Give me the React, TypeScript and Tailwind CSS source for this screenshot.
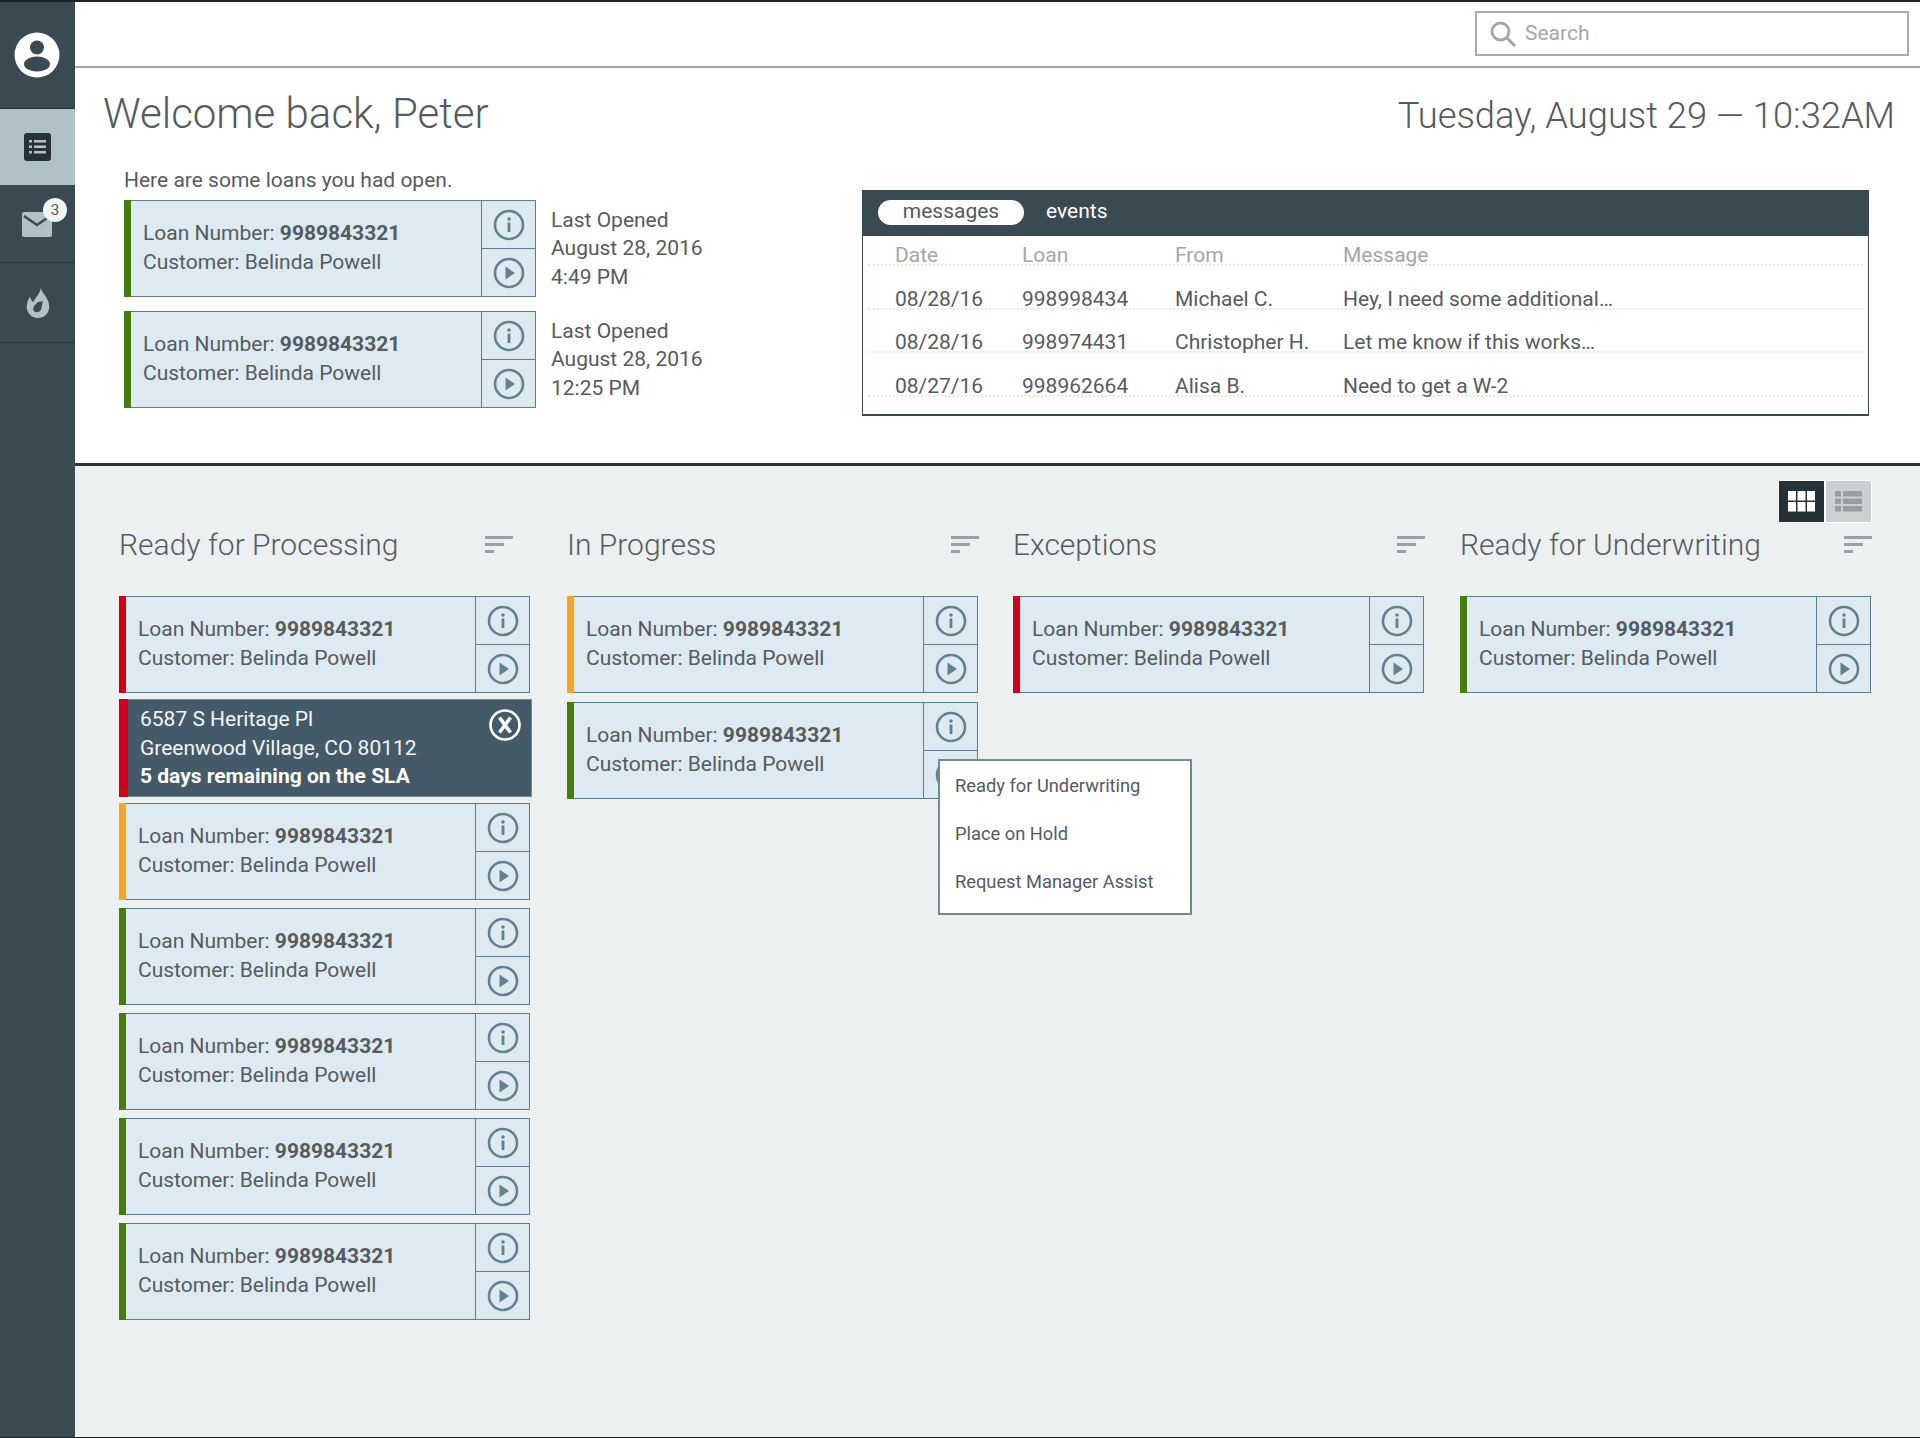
import React from 'react';

const InfoIcon = () => (
  <svg width="32" height="32" viewBox="0 0 32 32" fill="none" className="block">
    <circle cx="16" cy="16" r="14" stroke="#63808d" strokeWidth="2.6" />
    <circle cx="16" cy="10" r="1.8" fill="#63808d" />
    <rect x="14.6" y="13.5" width="2.8" height="9.5" fill="#63808d" />
  </svg>
);

const PlayIcon = () => (
  <svg width="32" height="32" viewBox="0 0 32 32" fill="none" className="block">
    <circle cx="16" cy="16" r="14" stroke="#63808d" strokeWidth="2.6" />
    <path d="M12.5 9.5 L22 16 L12.5 22.5 Z" fill="#63808d" />
  </svg>
);

const CloseIcon = () => (
  <svg width="32" height="32" viewBox="0 0 32 32" fill="none" className="block">
    <circle cx="16" cy="16" r="14.5" stroke="#ffffff" strokeWidth="2.6" />
    <path d="M10.5 8.5 L21.5 23.5 M21.5 8.5 L10.5 23.5" stroke="#ffffff" strokeWidth="3.6" />
  </svg>
);

const SortIcon = () => (
  <svg width="28" height="20" viewBox="0 0 28 20" className="block">
    <rect x="0" y="1" width="28" height="3" fill="#9aa0a3" />
    <rect x="0" y="8" width="19" height="3" fill="#9aa0a3" />
    <rect x="0" y="15" width="9" height="3" fill="#9aa0a3" />
  </svg>
);

const LoanCard = ({ color }: { color: string }) => (
  <div className="flex h-[97px] bg-[#deeaf1] border border-[#5f7c89]">
    <div className={`w-[7px] -my-px -ml-px ${color}`} />
    <div className="flex-1 pl-[12px] pt-[18px] text-[21px] leading-[28.500px] text-[#555b5e]">
      <div>
        Loan Number: <span className="font-bold">9989843321</span>
      </div>
      <div>Customer: Belinda Powell</div>
    </div>
    <div className="w-[54px] flex flex-col border-l border-[#5f7c89]">
      <div className="flex-1 flex items-center justify-center border-b border-[#5f7c89]">
        <InfoIcon />
      </div>
      <div className="flex-1 flex items-center justify-center">
        <PlayIcon />
      </div>
    </div>
  </div>
);

const DetailCard = () => (
  <div className="flex h-[98px] -my-[2px] w-[413px] bg-[#445a68] border border-[#6f8a96] relative">
    <div className="w-[9px] -my-px -ml-px bg-[#d0021b]" />
    <div className="flex-1 pl-[12px] pt-[5px] text-[21px] leading-[28.500px] text-[#f2f5f7]">
      <div>6587 S Heritage Pl</div>
      <div>Greenwood Village, CO 80112</div>
      <div className="font-bold text-white">5 days remaining on the SLA</div>
    </div>
    <div className="absolute right-[10px] top-[9px]">
      <CloseIcon />
    </div>
  </div>
);

const messages = [
  { date: '08/28/16', loan: '998998434', from: 'Michael C.', text: 'Hey, I need some additional…' },
  { date: '08/28/16', loan: '998974431', from: 'Christopher H.', text: 'Let me know if this works…' },
  { date: '08/27/16', loan: '998962664', from: 'Alisa B.', text: 'Need to get a W-2' },
];

const green = 'bg-[#457c0d]';
const red = 'bg-[#d0021b]';
const orange = 'bg-[#f5a623]';

const App: React.FC = () => {
  return (
    <div className="flex min-h-screen w-full font-['Roboto',sans-serif] text-[#555b5e] border-t-2 border-b border-[#1c2226] bg-white">
      {/* Sidebar */}
      <div className="w-[75px] shrink-0 bg-[#3a4a52] flex flex-col">
        <div className="h-[106px] flex items-center justify-center">
          <svg width="46" height="46" viewBox="0 0 46 46" className="-ml-[1px]">
            <circle cx="23" cy="23" r="22.5" fill="#ffffff" />
            <circle cx="23" cy="15.5" r="7" fill="#3a4a52" />
            <ellipse cx="23" cy="32" rx="13" ry="7.5" fill="#3a4a52" />
          </svg>
        </div>
        <div className="h-[77px] bg-[#b0c1c9] border-t border-[#2b383f] flex items-center justify-center">
          <svg width="27" height="28" viewBox="0 0 27 28">
            <rect width="27" height="28" rx="3" fill="#263238" />
            <rect x="5" y="7" width="3" height="2.5" fill="#b0c1c9" />
            <rect x="10" y="7" width="12" height="2.5" fill="#b0c1c9" />
            <rect x="5" y="12.5" width="3" height="2.5" fill="#b0c1c9" />
            <rect x="10" y="12.5" width="12" height="2.5" fill="#b0c1c9" />
            <rect x="5" y="18" width="3" height="2.5" fill="#b0c1c9" />
            <rect x="10" y="18" width="12" height="2.5" fill="#b0c1c9" />
          </svg>
        </div>
        <div className="h-[78px] border-b border-[#2b383f] flex items-center justify-center relative">
          <svg width="30" height="25" viewBox="0 0 30 25" className="mt-[2px] -ml-[2px]">
            <rect width="30" height="25" rx="2" fill="#b0c1c9" />
            <path d="M2 4 L15 13 L28 4" fill="none" stroke="#3a4a52" strokeWidth="2.4" />
          </svg>
          <div className="absolute left-[43px] top-[13px] w-[24px] h-[24px] rounded-full bg-[#f2f4f5] flex items-center justify-center text-[15px] text-[#555b5e]">
            3
          </div>
        </div>
        <div className="h-[80px] border-b border-[#2b383f] flex items-center justify-center">
          <svg width="24" height="30" viewBox="0 0 24 32">
            <path
              fillRule="evenodd"
              fill="#b0c1c9"
              d="M15 0 C16 6 24 10 24 20 C24 27 18.500 32 12 32 C5.500 32 0 27 0 20 C0 15 2 11 4 9 C4 12 5 14 7 15 C9 10 14 7 15 0 Z M12 15 C9 18 6.500 20 7 23 C7.500 26 11 26.500 13.500 25 C16.500 23 16 18 17 14 C15.500 14.500 13.500 14 12 15 Z"
            />
          </svg>
        </div>
      </div>

      <div className="flex-1 min-w-0 flex flex-col">
        {/* Search bar */}
        <div className="h-[66px] border-b-2 border-[#a3a5a6] flex justify-end items-start pt-[9px] pr-[11px]">
          <div className="w-[434px] h-[45px] border-2 border-[#a9abac] flex items-center pl-[12px] gap-[8px] text-[21px] text-[#a4a6a7]">
            <svg width="28" height="28" viewBox="0 0 28 28" fill="none">
              <circle cx="11.500" cy="11.500" r="8.500" stroke="#a4a6a7" strokeWidth="2.800" />
              <path d="M17.500 17.500 L26 26" stroke="#a4a6a7" strokeWidth="3" />
            </svg>
            <span>Search</span>
          </div>
        </div>

        {/* Welcome section */}
        <div className="h-[398px] border-b-[3px] border-[#2c3539] flex flex-col">
          <div className="flex justify-between items-start pl-[28px] pr-[25px] pt-[21px]">
            <h1 className="text-[42px] leading-[50px] font-light text-[#555b5e]">Welcome back, Peter</h1>
            <div className="text-[36.300px] leading-[50px] font-light text-[#555b5e] mt-[2px]">
              Tuesday, August 29 — 10:32AM
            </div>
          </div>
          <div className="flex pl-[49px] pr-[51px] mt-[27px]">
            <div className="w-[738px] shrink-0">
              <p className="text-[21px] leading-[24px] mb-[8px]">Here are some loans you had open.</p>
              <div className="flex flex-col gap-[14px]">
                {['4:49 PM', '12:25 PM'].map((time) => (
                  <div key={time} className="flex items-center gap-[15px]">
                    <div className="w-[412px]">
                      <LoanCard color={green} />
                    </div>
                    <div className="text-[21px] leading-[28.500px]">
                      <div>Last Opened</div>
                      <div>August 28, 2016</div>
                      <div>{time}</div>
                    </div>
                  </div>
                ))}
              </div>
            </div>
            <div className="flex-1 h-[226px] mt-[22px] border border-b-2 border-[#3a4a52] flex flex-col">
              <div className="h-[46px] -mt-px bg-[#3a4a52] flex items-center pl-[15px] pb-[2px] gap-[22px] text-[21px] shrink-0">
                <div className="w-[146px] h-[25px] rounded-full bg-white flex items-center justify-center text-[#555b5e]">
                  messages
                </div>
                <div className="text-white">events</div>
              </div>
              <div className="px-[5px] text-[21px] leading-[16px]">
                <div className="grid grid-cols-[127px_153px_168px_1fr] pl-[27px] pb-[1px] h-[30px] items-end border-b-2 border-dotted border-[#e6e8e9] text-[#a4a6a7]">
                  <div>Date</div>
                  <div>Loan</div>
                  <div>From</div>
                  <div>Message</div>
                </div>
                {messages.map((m) => (
                  <div
                    key={m.loan}
                    className="grid grid-cols-[127px_153px_168px_1fr] pl-[27px] pb-[1px] h-[43.500px] items-end border-b-2 border-dotted border-[#e6e8e9]"
                  >
                    <div>{m.date}</div>
                    <div>{m.loan}</div>
                    <div>{m.from}</div>
                    <div>{m.text}</div>
                  </div>
                ))}
              </div>
            </div>
          </div>
        </div>

        {/* Board */}
        <div className="flex-1 bg-[#ecf0f1] pt-[14px] pl-[44px] relative">
          <div className="flex justify-end pr-[48px] mb-[1px]">
            <div className="flex gap-[2px] border border-white bg-white">
              <div className="w-[45px] h-[41px] bg-[#263238] flex items-center justify-center">
                <svg width="27" height="21" viewBox="0 0 27 21">
                  {[0, 9.500, 19].map((x) =>
                    [0, 11].map((y) => <rect key={`${x}-${y}`} x={x} y={y} width="8" height="9.500" fill="#ffffff" />),
                  )}
                </svg>
              </div>
              <div className="w-[45px] h-[41px] bg-[#cdd0d2] flex items-center justify-center">
                <svg width="27" height="21" viewBox="0 0 27 21">
                  {[0, 7.500, 15].map((y) => (
                    <g key={y}>
                      <rect x="0" y={y} width="6" height="5.500" fill="#9a9d9f" />
                      <rect x="8" y={y} width="19" height="5.500" fill="#9a9d9f" />
                    </g>
                  ))}
                </svg>
              </div>
            </div>
          </div>

          <div className="flex items-start">
            <Column title="Ready for Processing" sortOffset="mr-[17px]" className="mr-[37px]">
              <LoanCard color={red} />
              <DetailCard />
              <LoanCard color={orange} />
              <LoanCard color={green} />
              <LoanCard color={green} />
              <LoanCard color={green} />
              <LoanCard color={green} />
            </Column>
            <Column title="In Progress" sortOffset="-mr-[1px]" className="mr-[35px]">
              <LoanCard color={orange} />
              <div className="relative mt-[1px]">
                <LoanCard color={green} />
                <div className="absolute left-[371px] top-[57px] z-10 w-[254px] h-[156px] bg-white border-2 border-[#6f8a96] pl-[15px] pt-[1px] text-[18.300px] leading-[48px] text-[#555b5e]">
                  <div>Ready for Underwriting</div>
                  <div>Place on Hold</div>
                  <div>Request Manager Assist</div>
                </div>
              </div>
            </Column>
            <Column title="Exceptions" sortOffset="-mr-[1px]" className="mr-[36px]">
              <LoanCard color={red} />
            </Column>
            <Column title="Ready for Underwriting" sortOffset="-mr-[1px]">
              <LoanCard color={green} />
            </Column>
          </div>
        </div>
      </div>
    </div>
  );
};

const Column = ({
  title,
  sortOffset,
  className = '',
  children,
}: {
  title: string;
  sortOffset: string;
  className?: string;
  children: React.ReactNode;
}) => (
  <div className={`w-[411px] shrink-0 ${className}`}>
    <div className="flex items-center justify-between h-[40px] mb-[32px]">
      <h2 className="text-[30px] font-light text-[#555b5e]">{title}</h2>
      <div className={`mt-[2px] ${sortOffset}`}>
        <SortIcon />
      </div>
    </div>
    <div className="flex flex-col gap-[8px]">{children}</div>
  </div>
);

export default App;
